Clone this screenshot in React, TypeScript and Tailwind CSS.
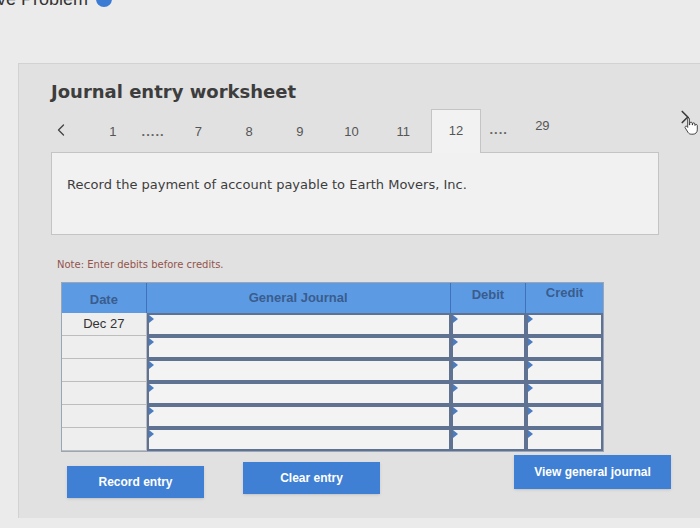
import { ChevronLeft, ChevronRight } from 'lucide-react'

const tabs = [
  { label: '1', ml: 'ml-[30px]', w: 'w-[24px]' },
  { label: '.....', ml: 'ml-[11px]', w: 'w-[35px]', dots: true },
  { label: '7', ml: 'ml-[16px]', w: 'w-[24px]' },
  { label: '8', ml: 'ml-[27px]', w: 'w-[24px]' },
  { label: '9', ml: 'ml-[27px]', w: 'w-[24px]' },
  { label: '10', ml: 'ml-[28px]', w: 'w-[24px]' },
  { label: '11', ml: 'ml-[28px]', w: 'w-[24px]' }
]

function HandCursor () {
  return (
    <svg width="14" height="20" viewBox="0 0 14 20" className="absolute left-[6px] top-[8px]">
      <path
        d="M4 1.5c.8 0 1.4.6 1.4 1.4V9h.3V7.4c0-.8.6-1.3 1.3-1.3s1.3.5 1.3 1.3V9h.2V8c0-.7.6-1.2 1.2-1.2s1.2.5 1.2 1.2v1.4h.2c0-.6.5-1 1.1-1s1.1.5 1.1 1.1v4.3c0 2.4-1.7 4.4-4.2 4.4H7.2c-1.5 0-2.4-.7-3.2-1.8L1.3 12c-.5-.6-.3-1.4.3-1.7.6-.3 1.2-.1 1.6.4l.5.7V2.9c0-.8.4-1.4 1.2-1.4z"
        fill="#fff"
        stroke="#333"
        strokeWidth="0.9"
      />
    </svg>
  )
}

function InputCell ({ w }: { w: string }) {
  return (
    <div className={`${w} h-full relative border-2 border-[#5f7292] bg-[#f3f3f3]`}>
      <span className="absolute left-0 top-0 w-0 h-0 border-t-[4px] border-b-[4px] border-l-[5px] border-t-transparent border-b-transparent border-l-[#4b7cc0]" />
    </div>
  )
}

function Row ({ date }: { date?: string }) {
  return (
    <div className="flex h-[23px]">
      <div className="w-[85px] h-full border-r border-b border-[#bdbdbd] bg-[#eeeeee] flex items-center justify-center text-[13px] text-[#333] font-['Liberation_Sans',sans-serif]">
        {date}
      </div>
      <InputCell w="w-[305px]" />
      <InputCell w="w-[76px]" />
      <InputCell w="w-[77px]" />
    </div>
  )
}

export default function App () {
  const rows = ['Dec 27', '', '', '', '', '']
  return (
    <div className="w-[700px] h-[528px] overflow-hidden bg-[#ebebeb] font-['DejaVu_Sans',sans-serif]">
      <div className="flex items-center -mt-[12px] h-[22px] -ml-[3px] gap-[8px]">
        <span className="text-[18px] text-[#333] font-['Liberation_Sans',sans-serif]">ve Problem</span>
        <span className="w-[16px] h-[16px] rounded-full bg-[#3b7bd4]" />
      </div>

      <div className="ml-[18px] mt-[53px] h-[455px] bg-[#e1e1e1] border-l border-t border-[#d2d2d2] pl-[32px] pt-[16px]">
        <h1 className="text-[18px] leading-[24px] font-bold text-[#3d3d3d]">Journal entry worksheet</h1>

        <div className="flex items-center h-[44px] mt-[4px] text-[13px] text-[#555] font-['Liberation_Sans',sans-serif]">
          <span className="w-[20px] flex justify-center text-[#444]">
            <ChevronLeft size={20} strokeWidth={1.6} />
          </span>
          {tabs.map((t, i) => (
            <span key={i} className={`${t.ml} ${t.w} text-center pt-[4px] ${t.dots ? 'font-bold tracking-[1px] text-[#666]' : ''}`}>{t.label}</span>
          ))}
          <span className="ml-[16px] w-[50px] h-full -mb-px relative z-10 border border-b-0 border-[#c4c4c4] bg-[#f2f2f2] flex items-center justify-center">12</span>
          <span className="ml-[3px] w-[30px] text-center font-bold tracking-[1px] text-[#666]">....</span>
          <span className="ml-[17px] w-[24px] text-center -mt-[8px]">29</span>
          <span className="ml-[124px] w-[22px] h-[30px] relative -mt-[14px] text-[#3a3a3a]">
            <ChevronRight size={22} strokeWidth={1.8} className="absolute left-[-4px] top-[-2px]" />
            <HandCursor />
          </span>
        </div>

        <div className="w-[608px] h-[83px] border border-[#c4c4c4] bg-[#f1f1f1] pl-[15px] pt-[22px]">
          <p className="text-[13px] text-[#3d3d3d]">Record the payment of account payable to Earth Movers, Inc.</p>
        </div>

        <p className="ml-[6px] mt-[22px] text-[10px] text-[#93544c]">Note: Enter debits before credits.</p>

        <div className="ml-[10px] mt-[10px] w-[543px] border border-[#9aa6b6] bg-[#eeeeee]">
          <div className="flex h-[30px] bg-[#5c9be3] text-[13px] font-bold text-[#3a5c8e] font-['Liberation_Sans',sans-serif]">
            <div className="w-[85px] flex items-center justify-center border-r border-[#3f72b8] pt-[4px]">Date</div>
            <div className="w-[305px] flex items-center justify-center border-r border-[#3f72b8]">General Journal</div>
            <div className="w-[76px] flex items-center justify-center border-r border-[#3f72b8] pb-[6px]">Debit</div>
            <div className="w-[77px] flex items-center justify-center pb-[10px]">Credit</div>
          </div>
          {rows.map((d, i) => <Row key={i} date={d} />)}
        </div>

        <div className="flex items-start mt-[2px] text-[12px] font-bold text-white font-['Liberation_Sans',sans-serif]">
          <button className="ml-[16px] mt-[12px] w-[137px] h-[32px] bg-[#3f80d4] shadow-sm">Record entry</button>
          <button className="ml-[39px] mt-[8px] w-[137px] h-[32px] bg-[#3f80d4] shadow-sm">Clear entry</button>
          <button className="ml-[134px] mt-[1px] w-[157px] h-[34px] bg-[#3f80d4] shadow-sm">View general journal</button>
        </div>
      </div>
    </div>
  )
}
